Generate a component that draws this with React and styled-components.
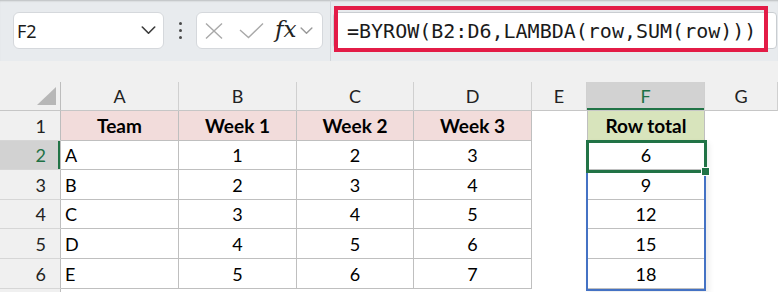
import React from 'react';
import styled, { createGlobalStyle, css } from 'styled-components';

const GlobalStyle = createGlobalStyle`
    html, body {
        margin: 0;
        padding: 0;
        background: #ffffff;
    }
    body {
        font-family: Lato, "Liberation Sans", sans-serif;
    }
`;

const Page = styled.div`
    width: 778px;
    height: 292px;
    overflow: hidden;
    display: flex;
    flex-direction: column;
    background: #ffffff;
`;

const Toolbar = styled.div`
    flex: none;
    height: 61px;
    display: flex;
    align-items: center;
    background: #e8ebee;
    box-shadow: inset 0 2px 2px -1px rgba(0, 0, 0, 0.2);
`;

const NameBox = styled.div`
    margin-left: 13px;
    width: 151px;
    height: 37px;
    box-sizing: border-box;
    display: flex;
    align-items: center;
    justify-content: space-between;
    padding: 0 7px 0 3px;
    background: #ffffff;
    border: 1px solid #d5d8dc;
    border-radius: 6px;
    font-family: "Noto Sans", "Open Sans", sans-serif;
    font-size: 18px;
    color: #1b1b1b;
`;

const Grip = styled.div`
    width: 32px;
    display: flex;
    flex-direction: column;
    align-items: center;
    gap: 4px;
`;

const GripDot = styled.span`
    width: 3px;
    height: 3px;
    border-radius: 50%;
    background: #4a4a4a;
`;

const FxBox = styled.div`
    width: 127px;
    height: 37px;
    box-sizing: border-box;
    display: flex;
    align-items: center;
    padding: 0 4px 0 8px;
    background: #ffffff;
    border: 1px solid #d5d8dc;
    border-radius: 6px;
`;

const IconGap = styled.span`
    width: 16px;
`;

const FxLabel = styled.span`
    font-family: "DejaVu Serif", "Liberation Serif", serif;
    font-style: italic;
    font-size: 23px;
    color: #222222;
    margin: 0 4px 4px 11px;
`;

const Divider = styled.div`
    align-self: stretch;
    width: 1px;
    margin-left: 7px;
    background: #d2d5d9;
`;

const FormulaField = styled.div`
    position: relative;
    flex: 1;
    height: 37px;
    box-sizing: border-box;
    margin: 0 1px 0 2px;
    display: flex;
    align-items: center;
    padding-left: 13px;
    background: #ffffff;
    border: 1px solid #c9cdd1;
    border-radius: 4px;
    font-family: "DejaVu Sans Mono", "Liberation Mono", monospace;
    font-size: 20px;
    color: #1a1a1a;
`;

const Highlight = styled.div`
    position: absolute;
    left: 0;
    top: -7px;
    bottom: -4px;
    width: 434px;
    box-sizing: border-box;
    border: 4px solid #e31c47;
    pointer-events: none;
`;

const Gap = styled.div`
    flex: none;
    height: 21px;
    background: #f0f0f0;
`;

const Sheet = styled.div`
    flex: 1;
    display: grid;
    grid-template-columns: 61px 118px 118px 117px 118px 55px 118px 1fr;
    grid-template-rows: 29px 30px 29px 30px 29px 30px 30px 1fr;
    font-family: Lato, "Liberation Sans", sans-serif;
    font-size: 18px;
`;

const Corner = styled.div`
    grid-row: 1;
    grid-column: 1;
    display: flex;
    align-items: flex-end;
    justify-content: flex-end;
    padding: 0 4px 5px 0;
    background: #f0f0f0;
    border-right: 1px solid #bdbdbd;
    border-bottom: 1px solid #c6c6c6;
`;

const ColHead = styled.div`
    grid-row: 1;
    grid-column: ${p => p.$col};
    display: flex;
    align-items: flex-end;
    justify-content: center;
    padding-bottom: 3px;
    background: ${p => (p.$active ? '#d2d2d2' : '#f0f0f0')};
    color: ${p => (p.$active ? '#1e7145' : '#222222')};
    border-right: 1px solid #d0d0d0;
    border-bottom: 1px solid #c6c6c6;
    ${p => p.$active && css`
        box-shadow: inset 0 -2px 0 #217346;
    `}
`;

const RowHead = styled.div`
    grid-row: ${p => p.$row};
    grid-column: 1;
    display: flex;
    align-items: flex-end;
    justify-content: flex-end;
    padding: 0 14px 3px 0;
    background: ${p => (p.$active ? '#d2d2d2' : '#f0f0f0')};
    color: ${p => (p.$active ? '#1e7145' : '#222222')};
    border-right: 1px solid #bdbdbd;
    border-bottom: 1px solid #d6d6d6;
    ${p => p.$active && css`
        box-shadow: inset -2px 0 0 #217346;
    `}
`;

const Cell = styled.div`
    grid-row: ${p => p.$row};
    grid-column: ${p => p.$col};
    display: flex;
    align-items: flex-end;
    justify-content: ${p => (p.$left ? 'flex-start' : 'center')};
    padding: 0 4px 3px;
    min-width: 0;
    white-space: nowrap;
    background: ${p => p.$fill || '#ffffff'};
    font-weight: ${p => (p.$bold ? 700 : 400)};
    font-size: ${p => (p.$bold ? '19px' : '18px')};
    color: #000000;
    ${p => p.$bordered && css`
        border-right: 1px solid #bfbfbf;
        border-bottom: 1px solid #bfbfbf;
    `}
    ${p => p.$edge && css`
        border-left: 1px solid #bfbfbf;
    `}
`;

const SpillRange = styled.div`
    grid-column: 7;
    grid-row: 3 / 8;
    margin: -1px -1px -2px -1px;
    border: 2px solid #4472c4;
    box-shadow: 3px 3px 6px rgba(0, 0, 0, 0.08);
    pointer-events: none;
    z-index: 1;
`;

const ActiveCell = styled.div`
    position: relative;
    grid-column: 7;
    grid-row: 3;
    margin: -1px -2px -3px -1px;
    border: 3px solid #217346;
    pointer-events: none;
    z-index: 2;
`;

const FillHandle = styled.span`
    position: absolute;
    right: -6px;
    bottom: -6px;
    width: 7px;
    height: 7px;
    background: #217346;
    border: 1px solid #ffffff;
`;

const columns = ['A', 'B', 'C', 'D', 'E', 'F', 'G'];

const rows = [
    ['Team', 'Week 1', 'Week 2', 'Week 3', '', 'Row total', ''],
    ['A', 1, 2, 3, '', 6, ''],
    ['B', 2, 3, 4, '', 9, ''],
    ['C', 3, 4, 5, '', 12, ''],
    ['D', 4, 5, 6, '', 15, ''],
    ['E', 5, 6, 7, '', 18, ''],
];

const Chevron = ({ color, size }) => (
    <svg width={size} height={size * 0.55} viewBox="0 0 14 8" fill="none">
        <polyline points="1,1 7,7 13,1" stroke={color} strokeWidth="1.6" strokeLinecap="round" strokeLinejoin="round" />
    </svg>
);

const CancelIcon = () => (
    <svg width="18" height="16" viewBox="0 0 18 16" fill="none">
        <path d="M1 0.5 L17 15.5 M17 0.5 L1 15.5" stroke="#a9a9a9" strokeWidth="1.4" />
    </svg>
);

const EnterIcon = () => (
    <svg width="25" height="16" viewBox="0 0 25 16" fill="none">
        <path d="M1 7 L9.5 14.5 L24 0.5" stroke="#a9a9a9" strokeWidth="1.4" />
    </svg>
);

function cellProps(r, c) {
    const inTable = c <= 3;
    const inTotal = c === 5;
    return {
        $row: r + 2,
        $col: c + 2,
        $bordered: inTable || inTotal,
        $edge: inTotal,
        $bold: r === 0,
        $left: r > 0 && c === 0,
        $fill: r === 0 ? (inTable ? '#f2dcdb' : inTotal ? '#d8e4bc' : null) : null,
    };
}

export default function App() {
    return (
        <Page>
            <GlobalStyle />
            <Toolbar>
                <NameBox>
                    F2
                    <Chevron color="#3c3c3c" size={15} />
                </NameBox>
                <Grip>
                    <GripDot />
                    <GripDot />
                    <GripDot />
                </Grip>
                <FxBox>
                    <CancelIcon />
                    <IconGap />
                    <EnterIcon />
                    <FxLabel>fx</FxLabel>
                    <Chevron color="#9a9a9a" size={13} />
                </FxBox>
                <Divider />
                <FormulaField>
                    =BYROW(B2:D6,LAMBDA(row,SUM(row)))
                    <Highlight />
                </FormulaField>
            </Toolbar>
            <Gap />
            <Sheet>
                <Corner>
                    <svg width="19" height="18" viewBox="0 0 19 18">
                        <polygon points="19,0 19,18 0,18" fill="#b7b7b7" />
                    </svg>
                </Corner>
                {columns.map((col, i) => (
                    <ColHead key={col} $col={i + 2} $active={col === 'F'}>{col}</ColHead>
                ))}
                {rows.map((row, r) => (
                    <React.Fragment key={r}>
                        <RowHead $row={r + 2} $active={r === 1}>{r + 1}</RowHead>
                        {row.map((value, c) => (
                            <Cell key={c} {...cellProps(r, c)}>{value}</Cell>
                        ))}
                    </React.Fragment>
                ))}
                <RowHead $row={8} />
                <SpillRange />
                <ActiveCell>
                    <FillHandle />
                </ActiveCell>
            </Sheet>
        </Page>
    );
}
